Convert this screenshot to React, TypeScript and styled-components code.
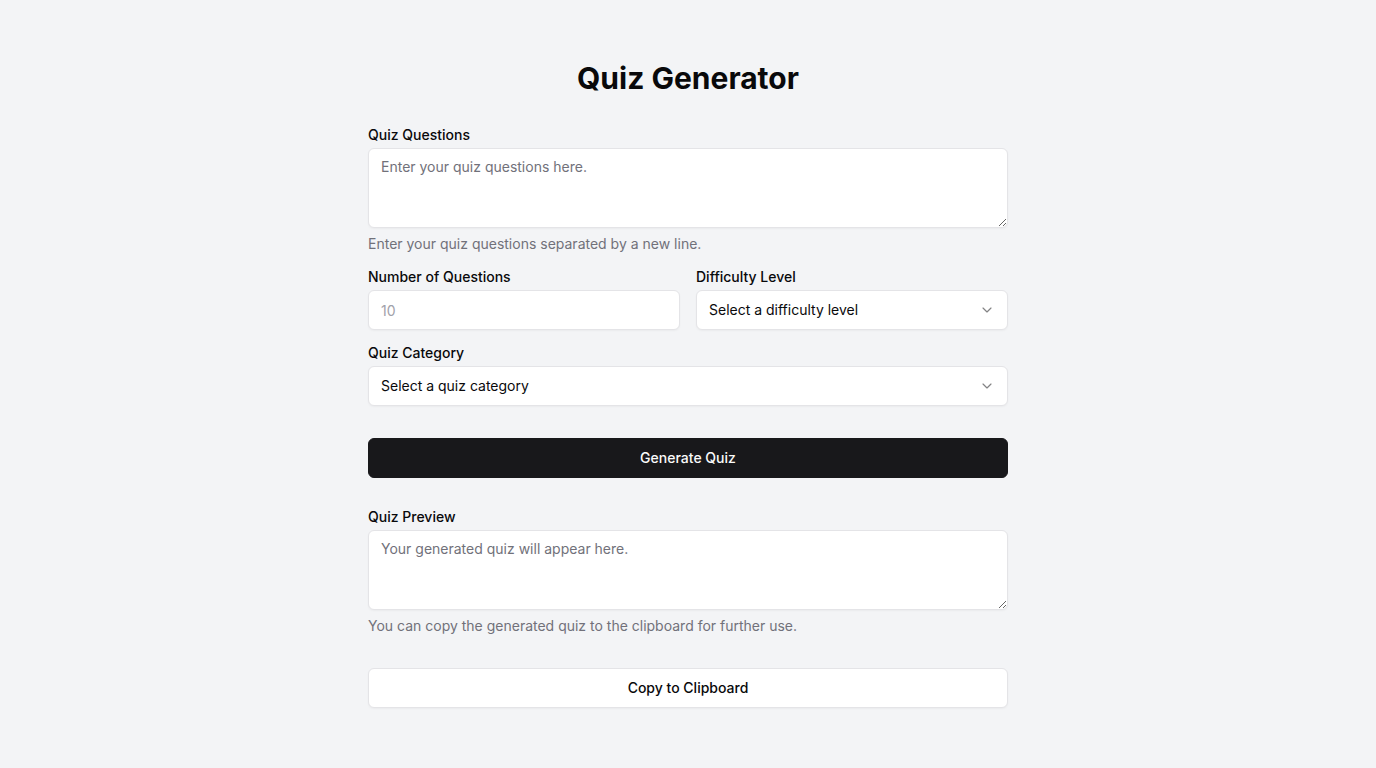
import React from 'react'
import styled, { createGlobalStyle } from 'styled-components'
import { ChevronDown } from 'lucide-react'

const GlobalStyle = createGlobalStyle`
  * { box-sizing: border-box; }
  body {
    margin: 0;
    background: #f3f4f6;
    font-family: Inter, "Noto Sans", sans-serif;
    color: #09090b;
  }
`

const App: React.FC = () => (
    <Page>
        <GlobalStyle />
        <Form>
            <Title>Quiz Generator</Title>

            <Field>
                <Label>Quiz Questions</Label>
                <TextArea placeholder="Enter your quiz questions here." />
                <Hint>Enter your quiz questions separated by a new line.</Hint>
            </Field>

            <Row>
                <Field>
                    <Label>Number of Questions</Label>
                    <Input placeholder="10" />
                </Field>
                <Field>
                    <Label>Difficulty Level</Label>
                    <SelectBox>
                        <span>Select a difficulty level</span>
                        <ChevronDown size={16} strokeWidth={1.75} />
                    </SelectBox>
                </Field>
            </Row>

            <Field>
                <Label>Quiz Category</Label>
                <SelectBox>
                    <span>Select a quiz category</span>
                    <ChevronDown size={16} strokeWidth={1.75} />
                </SelectBox>
            </Field>

            <Button variant="primary" space={32}>Generate Quiz</Button>

            <Field space={29}>
                <Label>Quiz Preview</Label>
                <TextArea placeholder="Your generated quiz will appear here." />
                <Hint>You can copy the generated quiz to the clipboard for further use.</Hint>
            </Field>

            <Button variant="outline" space={32}>Copy to Clipboard</Button>
        </Form>
    </Page>
)

const Page = styled.main`
  min-height: 768px;
  display: flex;
  justify-content: center;
  padding: 60px 16px;
`

const Form = styled.div`
  width: 640px;
  display: flex;
  flex-direction: column;
`

const Title = styled.h1`
  margin: 0 0 29px;
  font-size: 30px;
  line-height: 36px;
  font-weight: 700;
  text-align: center;
`

const Field = styled.div<{ space?: number }>`
  display: flex;
  flex-direction: column;
  margin-top: ${props => props.space ?? 0}px;
  margin-bottom: 13px;
`

const Row = styled.div`
  display: grid;
  grid-template-columns: 1fr 1fr;
  gap: 16px;
`

const Label = styled.label`
  font-size: 14px;
  line-height: 20px;
  font-weight: 500;
  margin-bottom: 3px;
`

const TextArea = styled.textarea`
  height: 80px;
  width: 100%;
  padding: 8px 12px;
  border: 1px solid #e4e4e7;
  border-radius: 6px;
  background: #fff;
  box-shadow: 0 1px 2px rgba(0, 0, 0, 0.04);
  font-family: inherit;
  font-size: 14px;
  line-height: 20px;
  color: #09090b;
  resize: vertical;
  outline: none;

  &::placeholder {
    color: #71717a;
  }
`

const Input = styled.input`
  height: 40px;
  width: 100%;
  padding: 8px 12px;
  border: 1px solid #e4e4e7;
  border-radius: 6px;
  background: #fff;
  box-shadow: 0 1px 2px rgba(0, 0, 0, 0.04);
  font-family: inherit;
  font-size: 14px;
  outline: none;

  &::placeholder {
    color: #a1a1aa;
  }
`

const SelectBox = styled.div`
  height: 40px;
  display: flex;
  align-items: center;
  justify-content: space-between;
  padding: 0 12px 1px;
  border: 1px solid #e4e4e7;
  border-radius: 6px;
  background: #fff;
  box-shadow: 0 1px 2px rgba(0, 0, 0, 0.04);
  font-size: 14px;

  svg {
    color: #09090b;
    opacity: 0.5;
  }
`

const Hint = styled.p`
  margin: 6px 0 0;
  font-size: 14px;
  line-height: 20px;
  color: #71717a;
`

const Button = styled.button<{ variant: 'primary' | 'outline'; space: number }>`
  height: 40px;
  width: 100%;
  margin-top: ${props => props.space - 13}px;
  padding: 0 16px 2px;
  border-radius: 6px;
  font-family: inherit;
  font-size: 14px;
  font-weight: 500;
  cursor: pointer;
  background: ${props => (props.variant === 'primary' ? '#18181b' : '#fff')};
  color: ${props => (props.variant === 'primary' ? '#fafafa' : '#09090b')};
  border: 1px solid ${props => (props.variant === 'primary' ? '#18181b' : '#e4e4e7')};
  box-shadow: ${props => (props.variant === 'outline' ? '0 1px 2px rgba(0, 0, 0, 0.04)' : 'none')};
`

export default App
